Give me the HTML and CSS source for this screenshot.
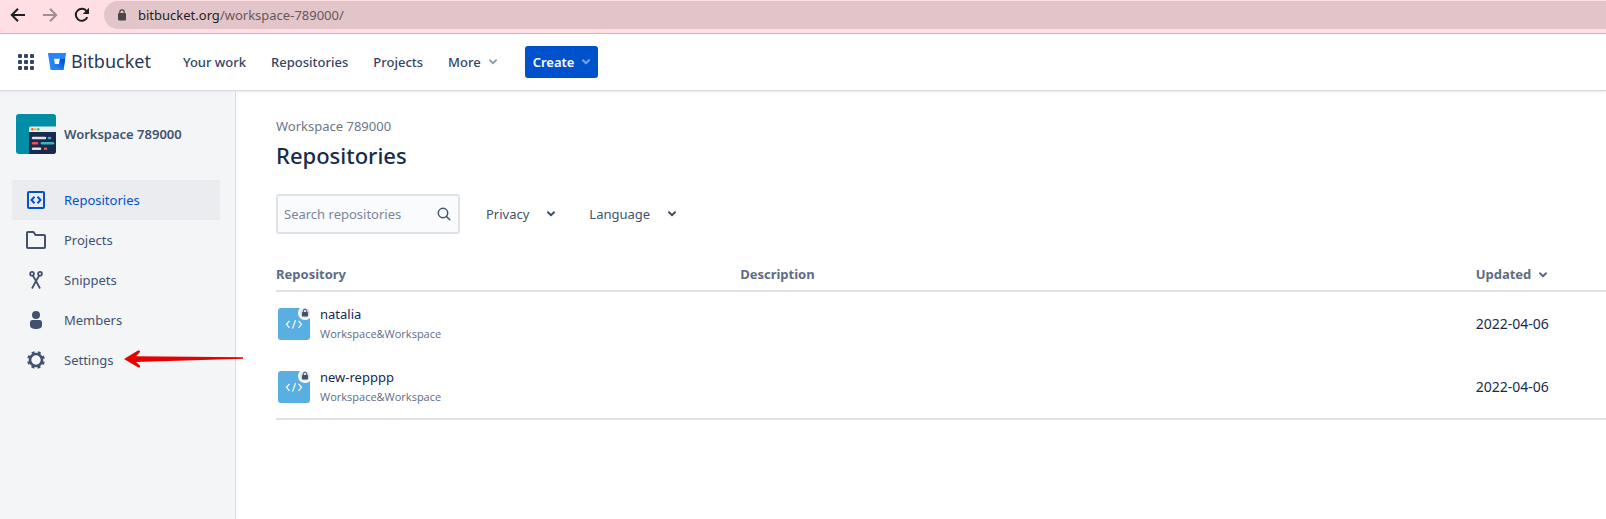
FILE: index.html
```html
<!DOCTYPE html>
<html lang="en">
<head>
<meta charset="utf-8">
<meta name="viewport" content="width=device-width, initial-scale=1">
<title>Repositories — Bitbucket</title>
<link rel="stylesheet" href="styles.css">
</head>
<body>
<svg class="sprite" aria-hidden="true">
  <symbol id="chevron" viewBox="0 0 8 6"><path d="M1 1.200 4 4.200 7 1.200" fill="none" stroke="currentColor" stroke-width="2" stroke-linecap="round" stroke-linejoin="round"/></symbol>
  <symbol id="repo" viewBox="0 0 32 32"><rect width="32" height="32" rx="3" fill="#59afe1"/><path d="M11.500 12.800 8.500 16.300l3 3.500M20.500 12.800l3 3.500-3 3.500M17.600 12 14.500 20.600" fill="none" stroke="#fff" stroke-width="1.200"/></symbol>
  <symbol id="lock" viewBox="0 0 14 14"><circle cx="7" cy="7" r="7" fill="#fff"/><circle cx="7" cy="7" r="5" fill="#dfe1e6"/><rect x="4" y="6" width="6" height="4.500" rx=".6" fill="#42526e"/><path d="M5.300 6V4.900a1.700 1.700 0 0 1 3.400 0V6" fill="none" stroke="#42526e"/></symbol>
</svg>
<div class="browser">
  <button class="browser-btn" aria-label="Back"><svg width="16" height="16" viewBox="0 0 16 16"><path d="M15 8H2.500M8 1.800 1.800 8 8 14.200" fill="none" stroke="currentColor" stroke-width="2"/></svg></button>
  <button class="browser-btn browser-btn-off" aria-label="Forward"><svg width="16" height="16" viewBox="0 0 16 16"><path d="M1 8h12.500M8 1.800 14.200 8 8 14.200" fill="none" stroke="currentColor" stroke-width="2"/></svg></button>
  <button class="browser-btn" aria-label="Reload"><svg width="16" height="16" viewBox="0 0 16 16"><path d="M13.300 10.200A6 6 0 1 1 12.700 4.300" fill="none" stroke="currentColor" stroke-width="2"/><path d="M15 .8V7H8.800z" fill="currentColor"/></svg></button>
  <div class="address">
    <svg width="10" height="12" viewBox="0 0 10 12"><rect x="1" y="4" width="8" height="7.500" rx="1" fill="currentColor"/><path d="M2.800 4.500V3a2.200 2.200 0 0 1 4.400 0v1.500" fill="none" stroke="currentColor" stroke-width="1.200"/></svg>
    <span class="url"><span class="host">bitbucket.org</span>/workspace-789000/</span>
  </div>
</div>
<header class="topbar">
  <button class="apps" aria-label="Switch to"><svg width="16" height="16" viewBox="0 0 16 16" fill="currentColor"><rect width="4" height="4" rx="1"/><rect x="6" width="4" height="4" rx="1"/><rect x="12" width="4" height="4" rx="1"/><rect y="6" width="4" height="4" rx="1"/><rect x="6" y="6" width="4" height="4" rx="1"/><rect x="12" y="6" width="4" height="4" rx="1"/><rect y="12" width="4" height="4" rx="1"/><rect x="6" y="12" width="4" height="4" rx="1"/><rect x="12" y="12" width="4" height="4" rx="1"/></svg></button>
  <a class="brand" href="#">
    <svg width="18" height="17" viewBox="0 0 18 17"><defs><linearGradient id="bb" x1="1" y1=".3" x2=".4" y2=".9"><stop offset="0" stop-color="#0052cc"/><stop offset="1" stop-color="#2684ff"/></linearGradient></defs><path d="M.6 0h16.800a.6.600 0 0 1 .6.700l-2.400 15.600a.8.800 0 0 1-.8.700H3.400a.9.900 0 0 1-.9-.7L0 .7A.6.600 0 0 1 .6 0zM7 11.300h4l1-5.600H6z" fill="#2684ff" fill-rule="evenodd"/><path d="M17.200 5.700H12l-1 5.600H7l-4.300 5.400a.9.900 0 0 0 .7.300h11.400a.8.800 0 0 0 .8-.7z" fill="url(#bb)"/></svg>
    <span>Bitbucket</span>
  </a>
  <nav class="topnav">
    <a href="#">Your work</a>
    <a href="#">Repositories</a>
    <a href="#">Projects</a>
    <button class="more">More <svg class="chev" width="8" height="6"><use href="#chevron"/></svg></button>
  </nav>
  <button class="create">Create <svg class="chev" width="8" height="6"><use href="#chevron"/></svg></button>
</header>
<div class="layout">
  <aside class="sidebar">
    <div class="workspace">
      <svg width="40" height="40" viewBox="0 0 40 40"><defs><clipPath id="av"><rect width="40" height="40" rx="3"/></clipPath></defs><g clip-path="url(#av)"><path fill="#008da6" d="M0 0h40v40H0z"/><path fill="#172b4d" d="M13 17h27v23H13z"/><path fill="#ebecf0" d="M13 18v-4a1.500 1.500 0 0 1 1.500-1.500H40V18z"/><g stroke-width="2.600" stroke-linecap="round" fill="none"><path d="M17 24h12M17 34.700h7" stroke="#dfe1e6"/><path d="M33 24h1" stroke="#4c9ad4"/><path d="M17 29.300h4M29 34.700h1" stroke="#ff4a4a"/><path d="M26 29.300h11" stroke="#3fb5b5"/></g><circle cx="16.300" cy="15.300" r="1.200" fill="#ff5630"/><circle cx="19.300" cy="15.300" r="1.200" fill="#ffc400"/><circle cx="22.300" cy="15.300" r="1.200" fill="#36b37e"/></g></svg>
      <span>Workspace 789000</span>
    </div>
    <nav class="sidenav">
      <a class="item item-active" href="#"><svg width="24" height="24" viewBox="0 0 24 24" fill="none" stroke="currentColor" stroke-width="2"><rect x="4" y="4" width="16" height="16" rx="1"/><path d="M10.500 8.800 7.500 12l3 3.200M13.500 8.800l3 3.200-3 3.200"/></svg>Repositories</a>
      <a class="item" href="#"><svg width="24" height="24" viewBox="0 0 24 24" fill="none" stroke="currentColor" stroke-width="2" stroke-linejoin="round"><path d="M4 4h5.500l2 3H20a1 1 0 0 1 1 1v11a1 1 0 0 1-1 1H4a1 1 0 0 1-1-1V5a1 1 0 0 1 1-1z"/></svg>Projects</a>
      <a class="item" href="#"><svg width="24" height="24" viewBox="0 0 24 24" fill="none" stroke="currentColor" stroke-width="1.800"><circle cx="8" cy="5.800" r="1.900"/><circle cx="16" cy="5.800" r="1.900"/><path d="M8.800 7.500 12 13l4 7.500M15.200 7.500 12 13l-4 7.500"/></svg>Snippets</a>
      <a class="item" href="#"><svg width="24" height="24" viewBox="0 0 24 24" fill="currentColor"><circle cx="12" cy="7" r="4"/><path d="M6 14.500a2.500 2.500 0 0 1 2.500-2.500h7a2.500 2.500 0 0 1 2.500 2.500v3c0 4.700-12 4.700-12 0z"/></svg>Members</a>
      <a class="item item-settings" href="#"><svg width="24" height="24" viewBox="0 0 24 24" fill="none" stroke="currentColor"><circle cx="12" cy="12" r="6" stroke-width="2.600"/><circle cx="12" cy="12" r="7.800" stroke-width="2.200" stroke-dasharray="3 3.126" stroke-dashoffset="-1.560"/></svg>Settings
        <svg class="pointer" width="120" height="18" viewBox="0 0 120 18" aria-hidden="true"><path d="M0 9 14 .6c1.500-.7 2.700.9 1.500 2L12 6.300 119 7.200v1.600L12 12l3.500 3.300c1.300 1.300 0 2.800-1.500 2z" fill="#e60000"/></svg></a>
    </nav>
  </aside>
  <main class="content">
    <a class="crumb" href="#">Workspace 789000</a>
    <h1 class="title">Repositories</h1>
    <div class="filters">
      <label class="search">
        <input type="text" placeholder="Search repositories" aria-label="Search repositories">
        <svg width="14" height="14" viewBox="0 0 14 14" fill="none" stroke="currentColor" stroke-width="1.500" stroke-linecap="round"><circle cx="6" cy="6" r="4.700"/><path d="m9.500 9.500 3.300 3.300"/></svg>
      </label>
      <button class="filter filter-privacy">Privacy <svg class="chev" width="8" height="6"><use href="#chevron"/></svg></button>
      <button class="filter">Language <svg class="chev" width="8" height="6"><use href="#chevron"/></svg></button>
    </div>
    <table class="repos">
      <thead><tr><th class="col-repo">Repository</th><th class="col-desc">Description</th><th>Updated <svg class="chev" width="8" height="6"><use href="#chevron"/></svg></th></tr></thead>
      <tbody>
        <tr>
          <td><div class="repo"><span class="repo-icon"><svg width="32" height="32"><use href="#repo"/></svg><svg class="badge" width="14" height="14"><use href="#lock"/></svg></span><div class="repo-text"><a class="name" href="#">natalia</a><a class="owner" href="#">Workspace&amp;Workspace</a></div></div></td>
          <td></td><td class="date">2022-04-06</td>
        </tr>
        <tr>
          <td><div class="repo"><span class="repo-icon"><svg width="32" height="32"><use href="#repo"/></svg><svg class="badge" width="14" height="14"><use href="#lock"/></svg></span><div class="repo-text"><a class="name" href="#">new-repppp</a><a class="owner" href="#">Workspace&amp;Workspace</a></div></div></td>
          <td></td><td class="date">2022-04-06</td>
        </tr>
      </tbody>
    </table>
  </main>
</div>
</body>
</html>
```
FILE: styles.css
```css
* { box-sizing: border-box; }
body {
  margin: 0;
  min-height: 100vh;
  display: flex;
  flex-direction: column;
  background: #fff;
  color: #172b4d;
  font: 13px/20px "Noto Sans", "Open Sans", sans-serif;
}
a { color: inherit; text-decoration: none; }
button {
  border: 0;
  padding: 0;
  background: none;
  color: inherit;
  font: inherit;
  cursor: pointer;
}
svg { display: block; flex: none; }
.sprite { position: absolute; width: 0; height: 0; }

.browser {
  display: flex;
  align-items: center;
  gap: 16px;
  height: 34px;
  padding: 0 0 4px 10px;
  background: #ffdfe4;
  border-bottom: 1px solid #ccb3b8;
  color: #1f1f23;
}
.browser-btn-off { color: #a18d92; }
.address {
  flex: 1;
  display: flex;
  align-items: center;
  gap: 11px;
  height: 28px;
  margin: 1px 0 0 -2px;
  padding-left: 13px;
  border-radius: 14px 0 0 14px;
  background: #e1c5c9;
  color: #4d4549;
}
.url { color: #66575c; }
.host { color: #1f1f23; }

.topbar {
  position: relative;
  display: flex;
  align-items: center;
  height: 56px;
  padding-left: 18px;
  color: #344563;
  font-weight: 500;
  box-shadow: 0 1px 1px #d9dbe2, 0 2px 3px #ebecf0;
}
.brand {
  display: flex;
  align-items: center;
  gap: 5px;
  margin-left: 14px;
  padding-bottom: 2px;
  color: #253858;
  font-size: 18px;
  font-weight: 400;
}
.topnav { display: flex; gap: 25px; margin-left: 32px; }
.more, .create { display: flex; align-items: center; gap: 8px; font-weight: 500; }
.more .chev { color: #97a0af; }
.create {
  height: 32px;
  margin-left: 28px;
  padding: 0 8px;
  border-radius: 3px;
  background: #0052cc;
  color: #fff;
  font-weight: 600;
}
.create .chev { color: #7ba5e5; }

.layout { flex: 1; display: flex; }
.sidebar {
  width: 236px;
  flex: none;
  padding: 24px 15px 0 12px;
  background: #f4f5f7;
  border-right: 1px solid #d9dbe0;
  color: #42526e;
}
.workspace {
  display: flex;
  align-items: center;
  gap: 8px;
  padding-left: 4px;
  margin-bottom: 26px;
  font-weight: 600;
}
.item {
  position: relative;
  display: flex;
  align-items: center;
  gap: 16px;
  height: 40px;
  padding-left: 12px;
  border-radius: 3px;
}
.item-active { background: #ebecf0; color: #0052cc; }
.pointer { position: absolute; left: 112px; top: 10px; }

.content { flex: 1; min-width: 0; padding: 26px 0 0 40px; color: #172b4d; }
.crumb { display: block; color: #6b778c; }
.title { margin: 5px 0 0; font-size: 22px; line-height: 28px; font-weight: 500; }
.filters { display: flex; align-items: center; margin-top: 25px; color: #42526e; }
.search {
  display: flex;
  align-items: center;
  width: 184px;
  height: 40px;
  padding: 0 7px 0 6px;
  border: 2px solid #dfe1e6;
  border-radius: 3px;
  background: #fafbfc;
}
.search input {
  flex: 1;
  min-width: 0;
  padding: 0;
  border: 0;
  background: none;
  font: inherit;
  outline: 0;
}
.search input::placeholder { color: #7a869a; opacity: 1; }
.filter { display: flex; align-items: center; gap: 18px; margin-left: 34px; }
.filter-privacy { margin-left: 26px; }

.repos { width: 100%; margin-top: 28px; border-collapse: collapse; table-layout: fixed; }
.col-repo { width: 34.9%; }
.col-desc { width: 55.3%; }
.repos th { height: 29px; padding: 2px 0 6px; color: #5e6c84; font-weight: 700; text-align: left; }
.repos th .chev { display: inline-block; margin-left: 4px; vertical-align: middle; }
.repos tbody { border-top: 2px solid #dfe1e6; border-bottom: 2px solid #dfe1e6; }
.repos td { height: 64px; padding: 0; }
.repo { display: flex; align-items: center; gap: 10px; padding-left: 2px; }
.repo-icon { position: relative; }
.badge { position: absolute; top: -2px; right: -2px; }
.repo-text { display: flex; flex-direction: column; }
.owner { color: #5e6c84; font-family: "Open Sans", "Noto Sans", sans-serif; font-size: 11px; }
.date { font-size: 14px; }
```
